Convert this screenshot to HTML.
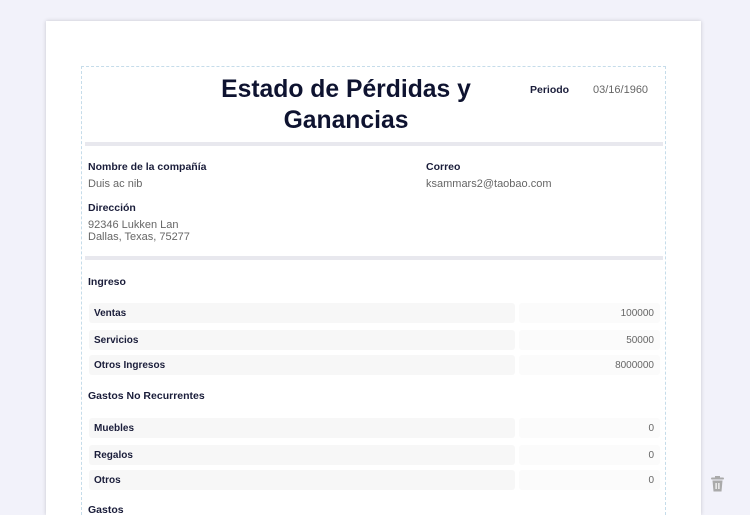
<!DOCTYPE html>
<html><head><meta charset="utf-8"><style>
*{margin:0;padding:0;box-sizing:border-box}
html,body{width:750px;height:515px;overflow:hidden}
body{background:#f2f2fa;font-family:"Liberation Sans",sans-serif;position:relative;color:#1a1d3a}
.page{position:absolute;left:46px;top:21px;width:655px;height:494px;background:#fff;box-shadow:0 0 4px rgba(0,0,0,.18)}
.frame{position:absolute;left:81px;top:66px;width:585px;height:449px;border:1px dashed #c5dcea;border-bottom:none}
.a{position:absolute;white-space:nowrap}
.title{left:160px;width:372px;top:74px;text-align:center;font-size:24.7px;font-weight:bold;line-height:31px;color:#0e1330}
.bar{position:absolute;left:85px;width:578px;height:4px;background:#e8e8ee}
.lbl{font-size:10.5px;font-weight:bold;color:#1a1d3a}
.val{font-size:11px;color:#666}
.row{position:absolute;left:89px;width:426px;height:20px;background:#f7f7f7;border-radius:3px;font-size:10px;font-weight:bold;padding:5px 0 0 5px}
.rv{position:absolute;left:519px;width:141px;height:20px;background:#fbfbfb;border-radius:3px;font-size:10px;color:#666;text-align:right;padding:5px 6px 0 0}
.sec{font-size:10.5px;font-weight:bold;color:#1a1d3a}
</style></head><body>
<div class="page"></div>
<div class="frame"></div>
<div class="a title">Estado de Pérdidas y<br>Ganancias</div>
<div class="a lbl" style="left:530px;top:84px">Periodo</div>
<div class="a val" style="left:593px;top:84px">03/16/1960</div>
<div class="bar" style="top:142px"></div>
<div class="a lbl" style="left:88px;top:161px">Nombre de la compañía</div>
<div class="a val" style="left:88px;top:178px">Duis ac nib</div>
<div class="a lbl" style="left:426px;top:161px">Correo</div>
<div class="a val" style="left:426px;top:178px">ksammars2@taobao.com</div>
<div class="a lbl" style="left:88px;top:202px">Dirección</div>
<div class="a val" style="left:88px;top:219px;line-height:12px">92346 Lukken Lan<br>Dallas, Texas, 75277</div>
<div class="bar" style="top:256px"></div>
<div class="a sec" style="left:88px;top:276px">Ingreso</div>
<div class="row" style="top:303px">Ventas</div><div class="rv" style="top:303px">100000</div>
<div class="row" style="top:330px">Servicios</div><div class="rv" style="top:330px">50000</div>
<div class="row" style="top:355px">Otros Ingresos</div><div class="rv" style="top:355px">8000000</div>
<div class="a sec" style="left:88px;top:390px">Gastos No Recurrentes</div>
<div class="row" style="top:418px">Muebles</div><div class="rv" style="top:418px">0</div>
<div class="row" style="top:445px">Regalos</div><div class="rv" style="top:445px">0</div>
<div class="row" style="top:470px">Otros</div><div class="rv" style="top:470px">0</div>
<div class="a sec" style="left:88px;top:504px">Gastos</div>
<svg style="position:absolute;left:711px;top:476px" width="13" height="16" viewBox="0 0 13 16"><rect x="0" y="1.5" width="13" height="2" rx="1" fill="#aaa"/><rect x="4" y="0" width="5" height="2" fill="#aaa"/><path d="M1.5 4.5h10l-1 11h-8z" fill="#aaa"/><rect x="4.5" y="7" width="1.2" height="6" fill="#fff"/><rect x="7.3" y="7" width="1.2" height="6" fill="#fff"/></svg>
</body></html>
